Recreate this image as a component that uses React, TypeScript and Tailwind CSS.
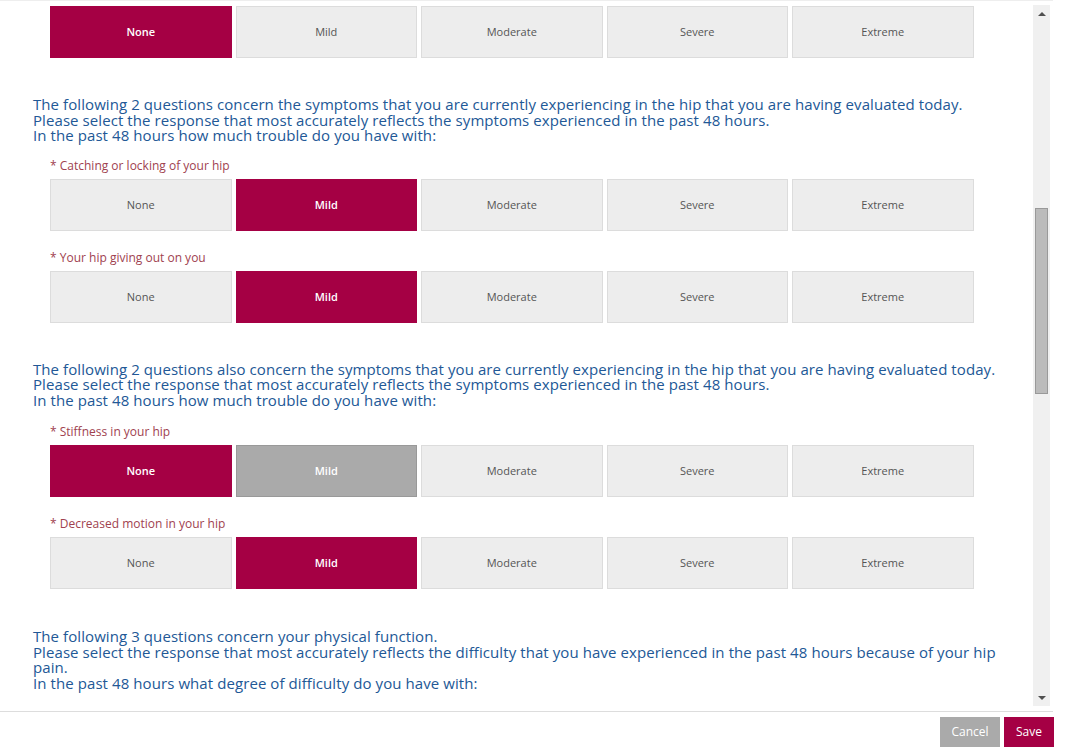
import React from "react";

const OPTIONS = ["None", "Mild", "Moderate", "Severe", "Extreme"];

type Question = { label?: string; selected: number; hover?: number };

function OptionRow({ q }: { q: Question }) {
  return (
    <div className="flex flex-col">
      {q.label && (
        <p className="text-[12px] leading-[15px] text-[#a0424f] mb-[6px]">* {q.label}</p>
      )}
      <div className="flex gap-[4px]">
        {OPTIONS.map((opt, i) => {
          const selected = i === q.selected;
          const hover = i === q.hover;
          let cls = "bg-[#ededed] border-[#dcdcdc] text-[#555]";
          if (selected) cls = "bg-[#a50044] border-[#a50044] text-white font-semibold";
          else if (hover) cls = "bg-[#aaaaaa] border-[#999] text-white font-semibold";
          return (
            <button
              key={opt}
              className={`w-[181.5px] h-[52px] border text-[11px] flex items-center justify-center ${cls}`}
            >
              {opt}
            </button>
          );
        })}
      </div>
    </div>
  );
}

function Intro({ lines }: { lines: string[] }) {
  return (
    <div className="text-[15px] leading-[15.5px] tracking-[0.08px] text-[#225896] w-[965px]">
      {lines.map((l, i) => (
        <p key={i}>{l}</p>
      ))}
    </div>
  );
}

export default function App() {
  return (
    <div
      className="w-[1087px] h-[747px] bg-white overflow-hidden flex flex-col"
      style={{ fontFamily: '"Open Sans", "Liberation Sans", sans-serif' }}
    >
      <div className="h-[2px] w-[1053px] bg-[#eeeeee]" />
      <div className="flex h-[705px] pt-[4px]">
        <div className="w-[1033px] h-[701px] overflow-hidden pl-[33px]">
          <div className="pl-[17px] pt-[1px]">
            <OptionRow q={{ selected: 0 }} />
          </div>

          <div className="mt-[39px]">
            <Intro
              lines={[
                "The following 2 questions concern the symptoms that you are currently experiencing in the hip that you are having evaluated today.",
                "Please select the response that most accurately reflects the symptoms experienced in the past 48 hours.",
                "In the past 48 hours how much trouble do you have with:",
              ]}
            />
          </div>
          <div className="pl-[17px] mt-[14px] flex flex-col gap-[19px]">
            <OptionRow q={{ label: "Catching or locking of your hip", selected: 1 }} />
            <OptionRow q={{ label: "Your hip giving out on you", selected: 1 }} />
          </div>

          <div className="mt-[39px]">
            <Intro
              lines={[
                "The following 2 questions also concern the symptoms that you are currently experiencing in the hip that you are having evaluated today.",
                "Please select the response that most accurately reflects the symptoms experienced in the past 48 hours.",
                "In the past 48 hours how much trouble do you have with:",
              ]}
            />
          </div>
          <div className="pl-[17px] mt-[16px] flex flex-col gap-[19px]">
            <OptionRow q={{ label: "Stiffness in your hip", selected: 0, hover: 1 }} />
            <OptionRow q={{ label: "Decreased motion in your hip", selected: 1 }} />
          </div>

          <div className="mt-[40px]">
            <Intro
              lines={[
                "The following 3 questions concern your physical function.",
                "Please select the response that most accurately reflects the difficulty that you have experienced in the past 48 hours because of your hip pain.",
                "In the past 48 hours what degree of difficulty do you have with:",
              ]}
            />
          </div>
        </div>
        <div className="w-[17px] h-[701px] bg-[#f0f0f0] flex flex-col items-center justify-between">
          <div className="h-[17px] flex items-center justify-center">
            <div className="w-0 h-0 border-l-[4px] border-r-[4px] border-b-[4px] border-l-transparent border-r-transparent border-b-[#505050]" />
          </div>
          <div className="flex-1 w-full relative">
            <div className="absolute left-[2px] right-[2px] top-[186px] h-[186px] bg-[#bbbbbb] border border-[#999]" />
          </div>
          <div className="h-[17px] flex items-center justify-center">
            <div className="w-0 h-0 border-l-[4px] border-r-[4px] border-t-[4px] border-l-transparent border-r-transparent border-t-[#505050]" />
          </div>
        </div>
      </div>
      <div className="mt-[5px] h-[1px] w-[1053px] bg-[#dddddd]" />
      <div className="flex justify-end gap-[4px] pt-[5px] pr-[33px]">
        <button className="h-[30px] w-[60px] bg-[#aaaaaa] text-white text-[12px]">Cancel</button>
        <button className="h-[30px] w-[50px] bg-[#a50044] text-white text-[12px]">Save</button>
      </div>
    </div>
  );
}
